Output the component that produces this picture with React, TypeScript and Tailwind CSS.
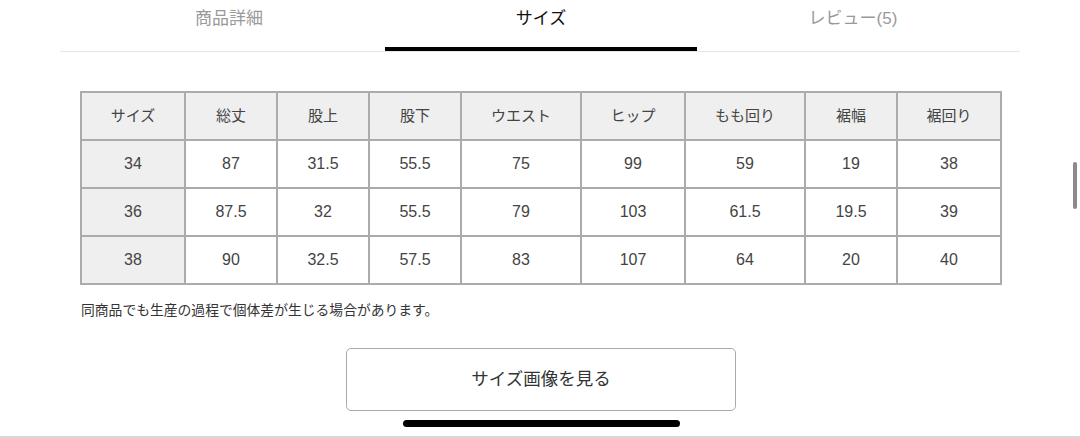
import React from "react";

const headers = ["サイズ", "総丈", "股上", "股下", "ウエスト", "ヒップ", "もも回り", "裾幅", "裾回り"];
const rows = [
  ["34", "87", "31.5", "55.5", "75", "99", "59", "19", "38"],
  ["36", "87.5", "32", "55.5", "79", "103", "61.5", "19.5", "39"],
  ["38", "90", "32.5", "57.5", "83", "107", "64", "20", "40"],
];

export default function App() {
  const font = { fontFamily: '"Liberation Sans", "Noto Sans CJK JP", sans-serif' };
  return (
    <div className="relative w-[1080px] h-[438px] bg-white overflow-hidden text-[#333]" style={font}>
      {/* tabs */}
      <div className="px-[60px]">
        <div className="flex items-start border-b border-[#e6e6e6] pl-[13px] h-[52px]">
          <div className="w-[312px] h-[51px] flex items-start justify-center pt-[7px] text-[17px] leading-[24px] text-[#999]">商品詳細</div>
          <div className="w-[312px] h-[51px] flex items-start justify-center pt-[7px] text-[17px] leading-[24px] text-[#111] border-b-4 border-black">サイズ</div>
          <div className="w-[312px] h-[51px] flex items-start justify-center pt-[7px] text-[17px] leading-[24px] text-[#999]">レビュー(5)</div>
        </div>
      </div>

      {/* table */}
      <div className="ml-[80px] mt-[39px] w-[922px] border-l-2 border-t-2 border-[#ababab] grid grid-cols-[104px_92px_92px_92px_120px_104px_120px_92px_104px]">
        {headers.map((h) => (
          <div key={h} className="h-[48px] border-r-2 border-b-2 border-[#ababab] bg-[#efefef] flex items-center justify-center text-[15px] text-[#444]">
            {h}
          </div>
        ))}
        {rows.map((r) =>
          r.map((c, i) => (
            <div
              key={r[0] + "-" + i}
              className={
                "h-[48px] border-r-2 border-b-2 border-[#ababab] flex items-center justify-center text-[16px] text-[#444] " +
                (i === 0 ? "bg-[#efefef]" : "bg-white")
              }
            >
              {c}
            </div>
          ))
        )}
      </div>

      <p className="ml-[81px] mt-[17px] text-[13.8px] leading-[18px] text-[#333]">同商品でも生産の過程で個体差が生じる場合があります。</p>

      <div className="flex justify-center mt-[28px]">
        <div className="ml-[2px] w-[390px] h-[63px] border border-[#aaa] rounded-[5px] flex items-center justify-center text-[17.5px] text-[#333]">
          サイズ画像を見る
        </div>
      </div>

      <div className="flex justify-center mt-[9px]">
        <div className="ml-[3px] w-[277px] h-[7px] rounded-full bg-black" />
      </div>

      <div className="absolute left-0 right-0 bottom-0 h-[2px] bg-[#d8d8d8]" />
      <div className="absolute left-[1073px] top-[162px] w-[4px] h-[47px] rounded-full bg-[#8a8a8a]" />
    </div>
  );
}
